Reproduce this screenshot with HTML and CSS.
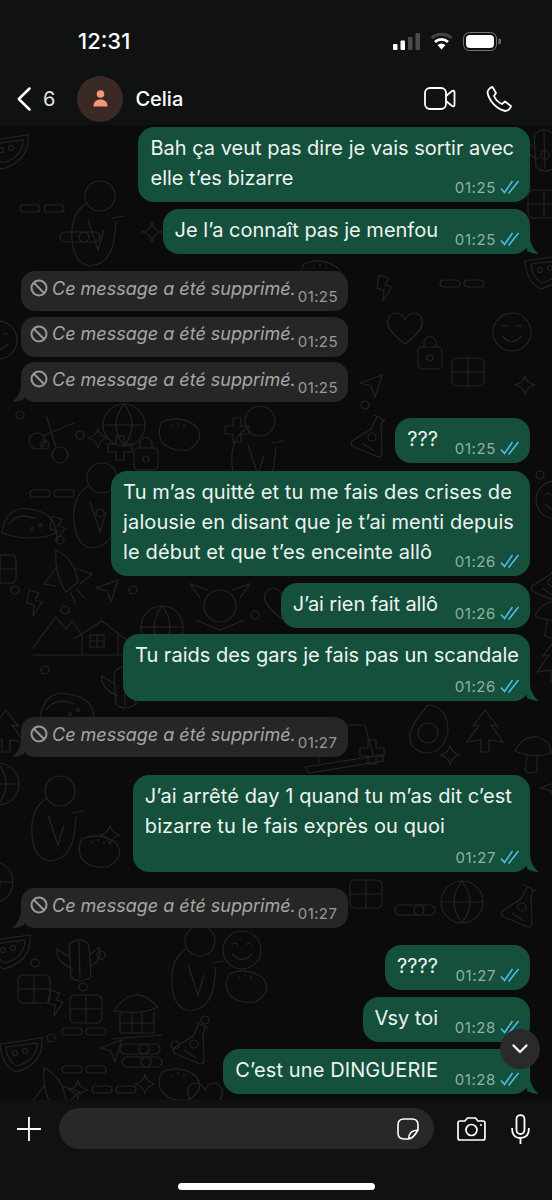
FILE: index.html
```html
<!DOCTYPE html>
<html lang="fr">
<head>
    <meta charset="UTF-8">
    <meta name="viewport" content="width=device-width, initial-scale=1.0">
    <title>Celia</title>
    <link rel="stylesheet" href="styles.css">
</head>
<body>
    <svg class="sprites">
        <symbol id="ticks" viewBox="0 0 20 14">
            <path d="M1 8.500 L4.500 12.500 L12.500 1 M8.500 12.500 L9 13 L18.500 1" fill="none" stroke="#53bdeb" stroke-width="1.500"/>
        </symbol>
        <symbol id="ban" viewBox="0 0 18 18">
            <circle cx="9" cy="9" r="7.500" fill="none" stroke="#999" stroke-width="2"/>
            <path d="M4 4 L14 14" stroke="#999" stroke-width="2"/>
        </symbol>

        <!-- fond d'écran -->
        <g id="d-face"><circle cx="20" cy="20" r="19"/><path d="M10 15 Q13 11 16 15 M24 15 Q27 11 30 15 M10 24 Q20 35 30 24"/></g>
        <g id="d-pills"><rect x="0" y="0" width="20" height="7" rx="3.500"/><rect x="24" y="0" width="20" height="7" rx="3.500"/></g>
        <g id="d-star"><path d="M10 0 Q11 8 20 10 Q11 12 10 20 Q9 12 0 10 Q9 8 10 0 Z"/></g>
        <g id="d-melon"><path d="M0 6 L42 0 Q44 26 16 34 Q2 28 0 6 Z"/><path d="M6 9 L37 5 Q37 22 17 28 Q7 23 6 9 Z"/><circle cx="15" cy="15" r="2.500"/><circle cx="25" cy="13" r="2.500"/></g>
        <g id="d-heart"><path d="M20 34 C4 22 0 14 4 7 C9 0 17 3 20 10 C23 3 31 0 36 7 C40 14 36 22 20 34 Z"/></g>
        <g id="d-flask"><path d="M24 0 L36 6 M27 2 L21 14 L2 26 Q0 30 4 32 L28 42 Q32 42 32 38 L31 12 L33 5"/><circle cx="22" cy="22" r="4"/><path d="M12 28 L24 36"/></g>
        <g id="d-plane"><path d="M0 8 L22 0 L15 22 L11 11 Z"/></g>
        <g id="d-grid"><rect x="0" y="0" width="32" height="28" rx="5"/><path d="M16 0 L16 28 M0 14 L32 14"/></g>
        <g id="d-scissors"><circle cx="9" cy="26" r="8"/><circle cx="32" cy="40" r="8"/><path d="M15 21 L46 8 M28 33 L18 0"/></g>
        <g id="d-rocket"><path d="M6 0 Q24 8 28 32 L16 42 Q4 24 6 0 Z"/><path d="M6 18 L-6 34 L6 36 M24 18 L42 24 L30 34 M20 42 L26 54 M26 38 L34 48"/></g>
        <g id="d-house"><path d="M0 34 L24 2 L34 14 L40 6 L50 20 M42 24 L70 6 L96 26 M50 20 L50 40 M86 20 L86 40 M0 40 L96 40"/><rect x="58" y="20" width="14" height="12"/><path d="M65 20 L65 32 M58 26 L72 26"/></g>
        <g id="d-cactus"><path d="M14 10 Q24 0 34 10 L36 42 Q24 50 16 42 Z M14 22 L2 14 Q0 26 18 34 M35 20 L44 12 Q48 24 35 32 M24 6 L25 44"/></g>
        <g id="d-man"><circle cx="30" cy="16" r="15"/><path d="M16 24 Q0 34 2 60 Q4 84 20 86 Q40 84 44 60 L46 42 M18 40 L28 70 L34 50 M42 38 L54 36"/></g>
        <g id="d-bolt"><path d="M4 0 L14 3 L10 10 L17 12 L8 26 L9 15 L2 13 Z"/></g>
        <g id="d-taco"><path d="M0 28 Q4 0 28 4 Q54 8 54 28 Q30 38 0 28 Z"/><path d="M6 20 Q16 6 34 14"/><circle cx="30" cy="24" r="1.500"/><circle cx="38" cy="20" r="1.500"/></g>
        <g id="d-sun"><circle cx="30" cy="30" r="16"/><path d="M6 44 L30 54 L54 44 M10 22 L0 8 L18 14 M50 22 L60 8 L42 14"/></g>
        <g id="d-tree"><path d="M20 0 L32 16 L26 15 L38 32 L24 30 L24 42 L16 42 L16 30 L2 32 L14 15 L8 16 Z"/></g>
        <g id="d-mush"><path d="M0 16 Q8 0 22 2 Q36 6 36 18 Q18 24 0 16 Z M12 20 L10 36 Q16 40 22 36 L22 21"/></g>
        <g id="d-avocado"><path d="M20 0 Q40 2 40 26 Q36 48 18 48 Q0 46 2 28 Q6 16 20 0 Z"/><circle cx="20" cy="28" r="10"/></g>
        <g id="d-laptop"><path d="M10 0 L60 0 L68 30 M0 42 L78 30 L78 36 L4 48 Z M10 0 L14 38"/></g>
        <g id="d-hut"><path d="M2 26 Q22 -4 46 22 Q30 30 2 26 Z M8 28 L8 48 L42 48 L42 26 M8 38 L42 38 M20 28 L20 48 M30 28 L30 48 M0 54 L50 50"/></g>
        <g id="d-globe"><circle cx="22" cy="22" r="21"/><path d="M1 22 L43 22 M22 1 Q6 22 22 43 M22 1 Q38 22 22 43"/></g>
        <g id="d-lock"><rect x="0" y="12" width="24" height="22" rx="4"/><path d="M6 12 L6 6 Q12 -3 18 6 L18 12"/><circle cx="12" cy="23" r="3"/></g>
        <g id="d-blob"><path d="M4 4 Q22 -4 38 8 Q48 22 30 32 Q8 34 2 20 Q0 10 4 4 Z"/><path d="M14 6 L14 9 M20 4 L20 7 M26 6 L26 9"/></g>
        <g id="d-plus"><path d="M8 0 L16 0 L16 8 L24 8 L24 16 L16 16 L16 24 L8 24 L8 16 L0 16 L0 8 L8 8 Z"/></g>
        <g id="d-slider"><rect x="0" y="0" width="40" height="10" rx="5"/><circle cx="24" cy="5" r="5"/></g>
        <g id="d-ring"><circle cx="5" cy="5" r="4"/></g>
    </svg>

    <div class="phone">
        <div class="status-bar">
            <span class="clock">12:31</span>
            <div class="status-icons">
                <svg width="27" height="18" viewBox="0 0 27 18">
                    <rect x="0" y="12" width="4.500" height="6" rx="1" fill="#fff"/>
                    <rect x="7.500" y="8.500" width="4.500" height="9.500" rx="1" fill="#fff"/>
                    <rect x="15" y="5" width="4.500" height="13" rx="1" fill="#4a4a4a"/>
                    <rect x="22.500" y="1" width="4.500" height="17" rx="1" fill="#4a4a4a"/>
                </svg>
                <svg width="23" height="18" viewBox="0 0 23 18">
                    <path d="M1.500 6 A15 15 0 0 1 21.500 6" fill="none" stroke="#444" stroke-width="3"/>
                    <path d="M5 10 A9.500 9.500 0 0 1 18 10" fill="none" stroke="#fff" stroke-width="2.800"/>
                    <path d="M11.500 17.500 L7.500 13 A6 6 0 0 1 15.500 13 Z" fill="#fff"/>
                </svg>
                <svg width="38" height="19" viewBox="0 0 38 19">
                    <rect x="0.500" y="0.500" width="33" height="18" rx="6" fill="none" stroke="#777"/>
                    <rect x="3" y="3" width="28" height="13" rx="4" fill="#fff"/>
                    <path d="M35.500 6.500 a3 3 0 0 1 0 6 Z" fill="#666"/>
                </svg>
            </div>
        </div>

        <header class="chat-header">
            <svg class="back" width="14" height="24" viewBox="0 0 14 24">
                <path d="M12.500 1.500 L1.800 12 L12.500 22.500" fill="none" stroke="#fff" stroke-width="2.500" stroke-linecap="round" stroke-linejoin="round"/>
            </svg>
            <span class="unread">6</span>
            <div class="avatar">
                <svg width="15" height="17" viewBox="0 0 15 17">
                    <circle cx="7.500" cy="4" r="3.800" fill="#f7947a"/>
                    <path d="M0.500 16.500 C0.500 11.500 3.500 9.500 7.500 9.500 C11.500 9.500 14.500 11.500 14.500 16.500 Z" fill="#f7947a"/>
                </svg>
            </div>
            <span class="contact">Celia</span>
            <div class="header-actions">
                <svg width="32" height="23" viewBox="0 0 32 23">
                    <rect x="1" y="1" width="21" height="21" rx="5" fill="none" stroke="#fff" stroke-width="1.800"/>
                    <path d="M22 9 L28 4 Q30.500 3 30.500 5.500 L30.500 17.500 Q30.500 20 28 19 L22 14" fill="none" stroke="#fff" stroke-width="1.800"/>
                </svg>
                <svg width="26" height="26" viewBox="0 0 26 26">
                    <path d="M6.500 1 C4 1.500 1.500 4 1.500 6.500 C3 15 11 23.500 19.500 25 C22 25 24.500 22.500 25 20 L19 15.500 L16 18 C12.500 16.500 9.500 13.500 8 10 L10 7 Z" fill="none" stroke="#fff" stroke-width="1.800" stroke-linejoin="round"/>
                </svg>
            </div>
        </header>

        <main class="chat">
            <svg class="wallpaper" width="552" height="975" viewBox="0 125 552 975">
                <g fill="none" stroke="#242424" stroke-width="1.200">
                    <use href="#d-melon" x="-14" y="135"/>
                    <use href="#d-pills" x="20" y="205"/>
                    <use href="#d-slider" x="60" y="232"/>
                    <use href="#d-star" x="142" y="222"/>
                    <use href="#d-grid" x="528" y="190"/>
                    <use href="#d-cactus" x="520" y="125"/>
                    <use href="#d-man" x="70" y="180"/>
                    <use href="#d-ring" x="540" y="150"/>
                    <use href="#d-face" x="-22" y="320"/>
                    <use href="#d-blob" x="300" y="260"/>
                    <use href="#d-heart" x="385" y="310"/>
                    <use href="#d-lock" x="418" y="335"/>
                    <use href="#d-face" x="492" y="312"/>
                    <use href="#d-grid" x="452" y="358"/>
                    <use href="#d-plane" x="360" y="375"/>
                    <use href="#d-star" x="515" y="375"/>
                    <use href="#d-melon" x="525" y="255"/>
                    <use href="#d-bolt" x="375" y="275"/>
                    <use href="#d-pills" x="440" y="280"/>
                    <use href="#d-scissors" x="28" y="415"/>
                    <use href="#d-man" x="230" y="405"/>
                    <use href="#d-flask" x="350" y="415"/>
                    <use href="#d-star" x="88" y="428"/>
                    <use href="#d-plus" x="108" y="436"/>
                    <use href="#d-lock" x="134" y="436"/>
                    <use href="#d-blob" x="158" y="418"/>
                    <use href="#d-plus" x="225" y="418"/>
                    <use href="#d-globe" x="102" y="403"/>
                    <use href="#d-pills" x="30" y="490"/>
                    <use href="#d-man" x="72" y="462"/>
                    <use href="#d-taco" x="2" y="505"/>
                    <use href="#d-bolt" x="48" y="516"/>
                    <use href="#d-grid" x="-16" y="555"/>
                    <use href="#d-rocket" x="50" y="550"/>
                    <use href="#d-bolt" x="25" y="590"/>
                    <use href="#d-plane" x="96" y="580"/>
                    <use href="#d-house" x="32" y="615"/>
                    <use href="#d-sun" x="190" y="576"/>
                    <use href="#d-heart" x="262" y="585"/>
                    <use href="#d-globe" x="140" y="605"/>
                    <use href="#d-taco" x="40" y="690"/>
                    <use href="#d-cactus" x="100" y="662"/>
                    <use href="#d-flask" x="530" y="560"/>
                    <use href="#d-tree" x="535" y="640"/>
                    <use href="#d-face" x="535" y="480"/>
                    <use href="#d-mush" x="535" y="600"/>
                    <use href="#d-avocado" x="408" y="705"/>
                    <use href="#d-tree" x="465" y="710"/>
                    <use href="#d-mush" x="515" y="735"/>
                    <use href="#d-laptop" x="305" y="725"/>
                    <use href="#d-star" x="440" y="745"/>
                    <use href="#d-plus" x="360" y="740"/>
                    <use href="#d-tree" x="-14" y="710"/>
                    <use href="#d-globe" x="-24" y="762"/>
                    <use href="#d-man" x="30" y="775"/>
                    <use href="#d-star" x="100" y="825"/>
                    <use href="#d-blob" x="78" y="835"/>
                    <use href="#d-globe" x="-30" y="860"/>
                    <use href="#d-plane" x="540" y="780"/>
                    <use href="#d-globe" x="440" y="880"/>
                    <use href="#d-grid" x="350" y="880"/>
                    <use href="#d-slider" x="395" y="905"/>
                    <use href="#d-flask" x="500" y="885"/>
                    <use href="#d-cactus" x="55" y="935"/>
                    <use href="#d-melon" x="-12" y="935"/>
                    <use href="#d-man" x="170" y="925"/>
                    <use href="#d-face" x="222" y="930"/>
                    <use href="#d-blob" x="225" y="970"/>
                    <use href="#d-grid" x="18" y="975"/>
                    <use href="#d-bolt" x="46" y="990"/>
                    <use href="#d-grid" x="70" y="995"/>
                    <use href="#d-hut" x="112" y="985"/>
                    <use href="#d-melon" x="0" y="1038"/>
                    <use href="#d-pills" x="62" y="1028"/>
                    <use href="#d-plane" x="100" y="1040"/>
                    <use href="#d-slider" x="120" y="1044"/>
                    <use href="#d-slider" x="122" y="1057"/>
                    <use href="#d-pills" x="62" y="1066"/>
                    <use href="#d-pills" x="92" y="1086"/>
                    <use href="#d-flask" x="172" y="1022"/>
                    <use href="#d-star" x="68" y="1080"/>
                    <use href="#d-star" x="135" y="1074"/>
                    <use href="#d-blob" x="158" y="1068"/>
                    <use href="#d-heart" x="185" y="1080"/>
                    <use href="#d-rocket" x="38" y="1068"/>
                    <use href="#d-ring" x="30" y="958"/>
                    <use href="#d-ring" x="96" y="950"/>
                    <use href="#d-ring" x="78" y="982"/>
                    <use href="#d-ring" x="200" y="1015"/>
                    <use href="#d-ring" x="46" y="1033"/>
                    <use href="#d-ring" x="170" y="1040"/>
                    <use href="#d-ring" x="15" y="410"/>
                    <use href="#d-ring" x="75" y="430"/>
                    <use href="#d-ring" x="40" y="440"/>
                    <use href="#d-ring" x="55" y="535"/>
                    <use href="#d-ring" x="95" y="508"/>
                    <use href="#d-ring" x="10" y="585"/>
                    <use href="#d-ring" x="60" y="605"/>
                    <use href="#d-ring" x="40" y="665"/>
                    <use href="#d-ring" x="128" y="585"/>
                    <use href="#d-ring" x="250" y="610"/>
                    <use href="#d-ring" x="470" y="860"/>
                    <use href="#d-ring" x="420" y="780"/>
                    <use href="#d-ring" x="360" y="400"/>
                    <use href="#d-ring" x="535" y="470"/>
                </g>
            </svg>

            <div class="msg">
                <p class="text">Bah ça veut pas dire je vais sortir avec<br>elle t’es bizarre</p>
                <div class="meta"><span>01:25</span><svg class="ticks"><use href="#ticks"/></svg></div>
            </div>
            <div class="msg single tail">
                <p class="text">Je l’a connaît pas je menfou</p>
                <div class="meta"><span>01:25</span><svg class="ticks"><use href="#ticks"/></svg></div>
            </div>

            <div class="deleted far">
                <svg class="ban"><use href="#ban"/></svg>
                <span class="deleted-text">Ce message a été supprimé.</span>
                <span class="deleted-time">01:25</span>
            </div>
            <div class="deleted">
                <svg class="ban"><use href="#ban"/></svg>
                <span class="deleted-text">Ce message a été supprimé.</span>
                <span class="deleted-time">01:25</span>
            </div>
            <div class="deleted tail">
                <svg class="ban"><use href="#ban"/></svg>
                <span class="deleted-text">Ce message a été supprimé.</span>
                <span class="deleted-time">01:25</span>
            </div>

            <div class="msg single gap-16">
                <p class="text">???</p>
                <div class="meta"><span>01:25</span><svg class="ticks"><use href="#ticks"/></svg></div>
            </div>
            <div class="msg loose gap-8">
                <p class="text">Tu m’as quitté et tu me fais des crises de<br>jalousie en disant que je t’ai menti depuis<br>le début et que t’es enceinte allô</p>
                <div class="meta"><span>01:26</span><svg class="ticks"><use href="#ticks"/></svg></div>
            </div>
            <div class="msg single tight">
                <p class="text">J’ai rien fait allô</p>
                <div class="meta"><span>01:26</span><svg class="ticks"><use href="#ticks"/></svg></div>
            </div>
            <div class="msg stacked snug tail">
                <p class="text">Tu raids des gars je fais pas un scandale</p>
                <div class="meta"><span>01:26</span><svg class="ticks"><use href="#ticks"/></svg></div>
            </div>

            <div class="deleted gap-16 tail">
                <svg class="ban"><use href="#ban"/></svg>
                <span class="deleted-text">Ce message a été supprimé.</span>
                <span class="deleted-time">01:27</span>
            </div>

            <div class="msg stacked wrapped loose gap-18 tail">
                <p class="text">J’ai arrêté day 1 quand tu m’as dit c’est<br>bizarre tu le fais exprès ou quoi</p>
                <div class="meta"><span>01:27</span><svg class="ticks"><use href="#ticks"/></svg></div>
            </div>

            <div class="deleted gap-16 tail">
                <svg class="ban"><use href="#ban"/></svg>
                <span class="deleted-text">Ce message a été supprimé.</span>
                <span class="deleted-time">01:27</span>
            </div>

            <div class="msg single far">
                <p class="text">????</p>
                <div class="meta"><span>01:27</span><svg class="ticks"><use href="#ticks"/></svg></div>
            </div>
            <div class="msg single">
                <p class="text">Vsy toi</p>
                <div class="meta"><span>01:28</span><svg class="ticks"><use href="#ticks"/></svg></div>
            </div>
            <div class="msg single loose tail">
                <p class="text">C’est une DINGUERIE</p>
                <div class="meta"><span>01:28</span><svg class="ticks"><use href="#ticks"/></svg></div>
            </div>

            <div class="scroll-down">
                <svg width="16" height="10" viewBox="0 0 16 10">
                    <path d="M1.500 1.500 L8 8 L14.500 1.500" fill="none" stroke="#fff" stroke-width="2.200" stroke-linecap="round" stroke-linejoin="round"/>
                </svg>
            </div>
        </main>

        <footer class="composer">
            <div class="composer-row">
                <svg class="plus" width="24" height="24" viewBox="0 0 24 24">
                    <path d="M12 0 L12 24 M0 12 L24 12" stroke="#fff" stroke-width="1.800"/>
                </svg>
                <div class="input">
                    <svg width="22" height="22" viewBox="0 0 22 22">
                        <path d="M7 1 L15 1 Q21 1 21 7 L21 12 Q16 21 11 21 L7 21 Q1 21 1 15 L1 7 Q1 1 7 1 Z M12 21 Q11 13 21 12" fill="none" stroke="#fff" stroke-width="1.600"/>
                    </svg>
                </div>
                <svg class="camera" width="29" height="24" viewBox="0 0 29 24">
                    <path d="M3 4 L8 4 L10.500 1 L18.500 1 L21 4 L26 4 Q28 4 28 6 L28 21 Q28 23 26 23 L3 23 Q1 23 1 21 L1 6 Q1 4 3 4 Z" fill="none" stroke="#fff" stroke-width="1.700"/>
                    <circle cx="14.500" cy="13" r="5.500" fill="none" stroke="#fff" stroke-width="1.700"/>
                    <circle cx="24" cy="8" r="1" fill="#fff"/>
                </svg>
                <svg class="mic" width="19" height="30" viewBox="0 0 19 30">
                    <rect x="5.500" y="1" width="8" height="19" rx="4" fill="none" stroke="#fff" stroke-width="1.800"/>
                    <path d="M1 14 Q1 24 9.500 24 Q18 24 18 14 M9.500 24 L9.500 30" fill="none" stroke="#fff" stroke-width="1.800"/>
                </svg>
            </div>
            <div class="home-bar"></div>
        </footer>
    </div>
</body>
</html>
```

FILE: styles.css
```css
* {
    margin: 0;
    padding: 0;
    box-sizing: border-box;
}

html, body {
    height: 100%;
    overflow: hidden;
}

body {
    background: #101212;
    font-family: Inter, 'Liberation Sans', sans-serif;
    color: #fff;
}

.sprites {
    display: none;
}

.phone {
    width: 552px;
    height: 1200px;
    display: flex;
    flex-direction: column;
}

/* barre d'état */
.status-bar {
    height: 72px;
    flex: none;
    display: flex;
    justify-content: space-between;
    align-items: center;
    padding: 10px 51px 0 78px;
}

.clock {
    font-size: 22px;
    font-weight: 500;
}

.status-icons {
    display: flex;
    align-items: center;
    gap: 10px;
}

/* en-tête */
.chat-header {
    height: 53px;
    flex: none;
    display: flex;
    align-items: center;
    padding: 0 40px 0 17px;
}

.unread {
    margin-left: 12px;
    font-size: 20px;
    color: #e4e4e4;
}

.avatar {
    width: 46px;
    height: 46px;
    margin-left: 22px;
    border-radius: 50%;
    background: #3b2925;
    display: flex;
    align-items: center;
    justify-content: center;
}

.contact {
    margin-left: 12px;
    font-size: 20px;
    font-weight: 500;
}

.header-actions {
    margin-left: auto;
    display: flex;
    align-items: center;
    gap: 30px;
}

/* conversation */
.chat {
    flex: 1;
    position: relative;
    overflow: hidden;
    background: #0b0b0b;
    display: flex;
    flex-direction: column;
    padding: 2px 22px 0 21px;
}

.wallpaper {
    position: absolute;
    top: 0;
    left: 0;
}

.msg {
    position: relative;
    align-self: flex-end;
    display: grid;
    margin-top: 7px;
    padding: 6px 10px 4px 12px;
    border-radius: 16px;
    background: #14503b;
}

.msg:first-of-type {
    margin-top: 0;
}

.text {
    grid-area: 1 / 1;
    margin-bottom: 5px;
    padding-right: 6px;
    font-size: 20px;
    line-height: 30px;
    color: #edf4f0;
    white-space: nowrap;
}

.loose .text {
    letter-spacing: 0.1px;
}

.tight .text {
    letter-spacing: -0.1px;
}

.meta {
    grid-area: 1 / 1;
    justify-self: end;
    align-self: end;
    height: 22px;
    display: flex;
    align-items: center;
    gap: 4px;
    font-size: 15px;
    letter-spacing: 0.6px;
    color: #8db3a3;
}

.ticks {
    width: 20px;
    height: 14px;
}

/* le texte garde la place de l'heure sur la même ligne */
.single .text {
    padding-right: 82px;
}

/* l'heure passe sur sa propre ligne */
.stacked .meta {
    grid-area: 2 / 1;
}

.stacked .text {
    padding-right: 1px;
}

.stacked.wrapped .text {
    padding-right: 8px;
}

.deleted {
    position: relative;
    align-self: flex-start;
    width: 327px;
    height: 40px;
    margin-top: 5.5px;
    padding: 0 0 6px 9px;
    border-radius: 14px;
    background: #262626;
    display: flex;
    align-items: center;
    white-space: nowrap;
}

.ban {
    width: 18px;
    height: 18px;
    flex: none;
}

.deleted-text {
    margin-left: 4px;
    font-size: 18px;
    font-style: italic;
    color: #a6a6a6;
}

.deleted-time {
    margin: 16px 0 0 2px;
    font-size: 15px;
    letter-spacing: 0.4px;
    color: #999;
}

.far {
    margin-top: 17px;
}

.gap-8 {
    margin-top: 8px;
}

.gap-16 {
    margin-top: 16px;
}

.gap-18 {
    margin-top: 18px;
}

.snug {
    margin-top: 6px;
}

/* queues des bulles */
.msg.tail::after,
.deleted.tail::after {
    content: "";
    position: absolute;
    bottom: 0;
    width: 12px;
    height: 18px;
    clip-path: path('M0 0 L3 0 C3 8 7 14 12 18 C8 18 4 17 0 15 Z');
}

.msg.tail::after {
    right: -9px;
    background: #14503b;
}

.deleted.tail::after {
    left: -9px;
    background: #262626;
    transform: scaleX(-1);
}

.scroll-down {
    position: absolute;
    right: 12px;
    top: 904px;
    width: 40px;
    height: 40px;
    border-radius: 50%;
    background: #2a2a2a;
    display: flex;
    align-items: center;
    justify-content: center;
}

/* zone de saisie */
.composer {
    height: 100px;
    flex: none;
    display: flex;
    flex-direction: column;
    background: #101212;
}

.composer-row {
    display: flex;
    align-items: center;
    padding: 8px 22px 0 17px;
}

.input {
    width: 376px;
    height: 41px;
    margin-left: 18px;
    padding-right: 15px;
    border-radius: 21px;
    background: #272828;
    display: flex;
    align-items: center;
    justify-content: flex-end;
}

.camera {
    margin-left: 23px;
}

.mic {
    margin-left: 25px;
}

.home-bar {
    width: 197px;
    height: 7px;
    margin: 34px auto 0;
    border-radius: 4px;
    background: #fff;
}
```
